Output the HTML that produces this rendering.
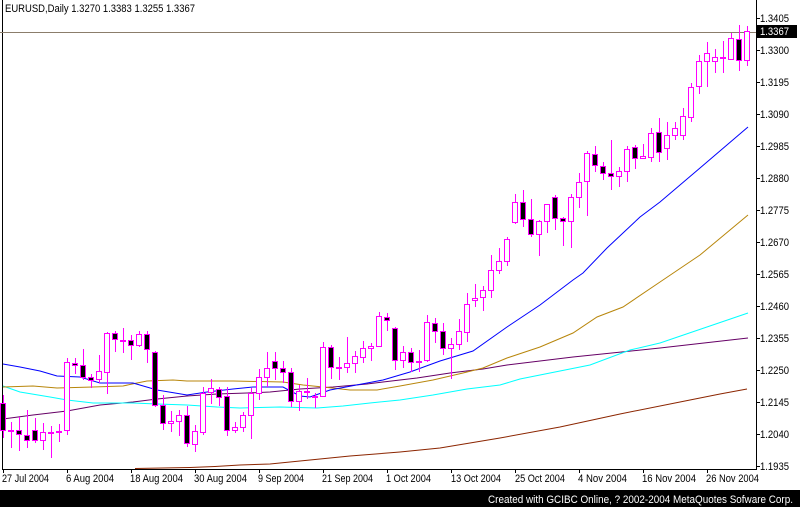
<!DOCTYPE html>
<html><head><meta charset="utf-8"><style>
html,body{margin:0;padding:0;background:#fff;}
svg{display:block;}
text{font-family:"Liberation Sans","DejaVu Sans",sans-serif;font-size:11px;}
</style></head><body>
<svg width="800" height="507" viewBox="0 0 800 507" xmlns="http://www.w3.org/2000/svg" shape-rendering="crispEdges">
<rect width="800" height="507" fill="#fff"/>
<path d="M2.5 0V469.5H756.5V0" fill="none" stroke="#000"/>
<text x="5" y="12" fill="#000" textLength="190" lengthAdjust="spacingAndGlyphs">EURUSD,Daily  1.3270 1.3383 1.3255 1.3367</text>
<line x1="0" y1="32.5" x2="756" y2="32.5" stroke="#8b7d6b"/>
<g fill="none" stroke-width="1" shape-rendering="auto">
<polyline stroke="#8b2500" points="135,468.5 190,467.5 215,466.5 240,465 270,464 300,461 350,456 400,452 440,448 500,438 560,427 620,414 680,402 720,394 747,389"/>
<polyline stroke="#660066" points="3,419 33,415 67,411 100,405 133,402 157,399 187,396 217,394 247,393 270,392 300,389 333,387 367,384 383,382 417,378 450,373 483,369 507,365 573,357 660,348 748,338"/>
<polyline stroke="#00ffff" points="3,386 20,392 50,397 67,400 93,403 133,403 157,404 187,405 217,407 240,408 280,407 317,408 343,406 370,403 400,400 433,395 467,389 500,385 520,379 590,365 630,350 660,343 748,313"/>
<polyline stroke="#b8860b" points="3,387 33,386 57,388 93,387 123,386 137,383 147,381 173,380 187,381 233,381 283,382 303,385 323,387 350,390 377,390 400,386 433,380 463,373 483,368 507,358 540,347 573,333 597,317 623,307 660,282 700,255 748,215"/>
<polyline stroke="#0000ff" points="3,364 20,367 40,371 57,376 80,377 100,383 133,383 157,390 187,395 207,392 233,389 253,387 283,387 300,396 310,397 330,390 383,380 410,372 440,361 473,351 507,327 540,305 573,280 583,273 607,248 640,217 660,202 700,168 748,127"/>
</g>
<path stroke="#ff00ff" fill="none" d="M3.5 395V438M11.5 422V448M19.5 417V451M27.5 410V448M35.5 418V443M43.5 423V450M51.5 426V458M59.5 424V442M67.5 358V435M75.5 358V374M83.5 349V380M91.5 374V388M99.5 355V383M107.5 332V394M115.5 331V352M123.5 328V353M131.5 335V360M139.5 331V347M147.5 331V363M155.5 351V407M163.5 395V430M171.5 411V432M179.5 410V436M187.5 406V447M195.5 425V452M203.5 387V435M211.5 379V404M219.5 387V406M227.5 387V436M235.5 422V433M243.5 412V432M251.5 388V439M259.5 369V400M267.5 352V387M275.5 352V380M283.5 361V383M291.5 368V407M299.5 385V411M307.5 378V399M315.5 393V408M323.5 342V397M331.5 345V379M339.5 357V380M347.5 337V373M355.5 351V373M363.5 341V363M371.5 343V361M379.5 312V347M387.5 313V331M395.5 327V370M403.5 346V368M411.5 348V372M419.5 350V372M427.5 315V362M435.5 318V343M443.5 323V355M451.5 338V379M459.5 319V350M467.5 293V342M475.5 284V307M483.5 286V311M491.5 255V298M499.5 248V274M507.5 237V266M515.5 194V224M523.5 190V227M531.5 199V237M539.5 220V256M547.5 204V233M555.5 195V230M563.5 217V246M571.5 194V248M579.5 173V208M587.5 151V216M595.5 146V172M603.5 162V180M611.5 140V190M619.5 167V187M627.5 146V182M635.5 145V169M643.5 144V158M651.5 128V162M659.5 118V162M667.5 122V160M675.5 122V140M683.5 108V140M691.5 83V122M699.5 55V94M707.5 42V87M715.5 49V73M723.5 41V73M731.5 33V60M739.5 25V71M747.5 26V66"/>
<g fill="#fff" stroke="#ff00ff">
<rect x="8.5" y="430.5" width="5" height="1"/>
<rect x="40.5" y="432.5" width="5" height="8"/>
<rect x="48.5" y="432.5" width="5" height="1"/>
<rect x="56.5" y="431.5" width="5" height="1"/>
<rect x="64.5" y="362.5" width="5" height="68"/>
<rect x="96.5" y="371.5" width="5" height="8"/>
<rect x="104.5" y="333.5" width="5" height="39"/>
<rect x="120.5" y="340.5" width="5" height="1"/>
<rect x="136.5" y="334.5" width="5" height="11"/>
<rect x="168.5" y="421.5" width="5" height="2"/>
<rect x="176.5" y="415.5" width="5" height="6"/>
<rect x="192.5" y="431.5" width="5" height="13"/>
<rect x="200.5" y="393.5" width="5" height="39"/>
<rect x="208.5" y="388.5" width="5" height="4"/>
<rect x="232.5" y="427.5" width="5" height="3"/>
<rect x="240.5" y="415.5" width="5" height="12"/>
<rect x="248.5" y="393.5" width="5" height="22"/>
<rect x="256.5" y="377.5" width="5" height="16"/>
<rect x="264.5" y="368.5" width="5" height="9"/>
<rect x="296.5" y="391.5" width="5" height="10"/>
<rect x="304.5" y="391.5" width="5" height="1"/>
<rect x="312.5" y="396.5" width="5" height="1"/>
<rect x="320.5" y="347.5" width="5" height="49"/>
<rect x="336.5" y="367.5" width="5" height="1"/>
<rect x="344.5" y="363.5" width="5" height="4"/>
<rect x="352.5" y="356.5" width="5" height="7"/>
<rect x="360.5" y="348.5" width="5" height="9"/>
<rect x="368.5" y="346.5" width="5" height="2"/>
<rect x="376.5" y="316.5" width="5" height="30"/>
<rect x="400.5" y="352.5" width="5" height="8"/>
<rect x="416.5" y="361.5" width="5" height="1"/>
<rect x="424.5" y="322.5" width="5" height="38"/>
<rect x="448.5" y="344.5" width="5" height="4"/>
<rect x="456.5" y="331.5" width="5" height="13"/>
<rect x="464.5" y="304.5" width="5" height="28"/>
<rect x="472.5" y="298.5" width="5" height="2"/>
<rect x="480.5" y="290.5" width="5" height="7"/>
<rect x="488.5" y="270.5" width="5" height="20"/>
<rect x="496.5" y="261.5" width="5" height="9"/>
<rect x="504.5" y="239.5" width="5" height="22"/>
<rect x="512.5" y="202.5" width="5" height="20"/>
<rect x="536.5" y="221.5" width="5" height="13"/>
<rect x="544.5" y="204.5" width="5" height="17"/>
<rect x="568.5" y="197.5" width="5" height="24"/>
<rect x="576.5" y="182.5" width="5" height="15"/>
<rect x="584.5" y="153.5" width="5" height="28"/>
<rect x="616.5" y="171.5" width="5" height="5"/>
<rect x="624.5" y="149.5" width="5" height="22"/>
<rect x="640.5" y="156.5" width="5" height="2"/>
<rect x="648.5" y="133.5" width="5" height="24"/>
<rect x="664.5" y="135.5" width="5" height="13"/>
<rect x="672.5" y="128.5" width="5" height="7"/>
<rect x="680.5" y="116.5" width="5" height="19"/>
<rect x="688.5" y="87.5" width="5" height="30"/>
<rect x="696.5" y="61.5" width="5" height="25"/>
<rect x="704.5" y="53.5" width="5" height="8"/>
<rect x="712.5" y="57.5" width="5" height="4"/>
<rect x="720.5" y="57.5" width="5" height="1"/>
<rect x="728.5" y="38.5" width="5" height="21"/>
<rect x="744.5" y="31.5" width="5" height="29"/>
</g>
<g fill="#000" stroke="#ff00ff">
<rect x="0.5" y="403.5" width="5" height="27"/>
<rect x="16.5" y="430.5" width="5" height="4"/>
<rect x="24.5" y="435.5" width="5" height="5"/>
<rect x="32.5" y="430.5" width="5" height="10"/>
<rect x="72.5" y="363.5" width="5" height="2"/>
<rect x="80.5" y="365.5" width="5" height="12"/>
<rect x="88.5" y="377.5" width="5" height="3"/>
<rect x="112.5" y="333.5" width="5" height="6"/>
<rect x="128.5" y="340.5" width="5" height="5"/>
<rect x="144.5" y="334.5" width="5" height="15"/>
<rect x="152.5" y="352.5" width="5" height="53"/>
<rect x="160.5" y="405.5" width="5" height="18"/>
<rect x="184.5" y="415.5" width="5" height="28"/>
<rect x="216.5" y="389.5" width="5" height="8"/>
<rect x="224.5" y="396.5" width="5" height="34"/>
<rect x="272.5" y="361.5" width="5" height="7"/>
<rect x="280.5" y="368.5" width="5" height="4"/>
<rect x="288.5" y="372.5" width="5" height="29"/>
<rect x="328.5" y="347.5" width="5" height="20"/>
<rect x="384.5" y="317.5" width="5" height="3"/>
<rect x="392.5" y="328.5" width="5" height="32"/>
<rect x="408.5" y="352.5" width="5" height="10"/>
<rect x="432.5" y="323.5" width="5" height="8"/>
<rect x="440.5" y="331.5" width="5" height="17"/>
<rect x="520.5" y="202.5" width="5" height="17"/>
<rect x="528.5" y="219.5" width="5" height="15"/>
<rect x="552.5" y="197.5" width="5" height="21"/>
<rect x="560.5" y="218.5" width="5" height="3"/>
<rect x="592.5" y="154.5" width="5" height="11"/>
<rect x="600.5" y="166.5" width="5" height="7"/>
<rect x="608.5" y="173.5" width="5" height="3"/>
<rect x="632.5" y="147.5" width="5" height="11"/>
<rect x="656.5" y="132.5" width="5" height="20"/>
<rect x="736.5" y="39.5" width="5" height="21"/>
</g>
<g stroke="#000">
<path d="M756 18.5h4M756 50.5h4M756 82.5h4M756 114.5h4M756 146.5h4M756 178.5h4M756 210.5h4M756 242.5h4M756 274.5h4M756 306.5h4M756 338.5h4M756 370.5h4M756 402.5h4M756 434.5h4M756 466.5h4"/>
<path d="M3.5 469v4M67.5 469v4M131.5 469v4M195.5 469v4M259.5 469v4M323.5 469v4M387.5 469v4M451.5 469v4M515.5 469v4M579.5 469v4M643.5 469v4M707.5 469v4"/>
</g>
<g fill="#000">
<text x="760" y="22" textLength="29" lengthAdjust="spacingAndGlyphs">1.3405</text>
<text x="760" y="54" textLength="29" lengthAdjust="spacingAndGlyphs">1.3300</text>
<text x="760" y="86" textLength="29" lengthAdjust="spacingAndGlyphs">1.3195</text>
<text x="760" y="118" textLength="29" lengthAdjust="spacingAndGlyphs">1.3090</text>
<text x="760" y="150" textLength="29" lengthAdjust="spacingAndGlyphs">1.2985</text>
<text x="760" y="182" textLength="29" lengthAdjust="spacingAndGlyphs">1.2880</text>
<text x="760" y="214" textLength="29" lengthAdjust="spacingAndGlyphs">1.2775</text>
<text x="760" y="246" textLength="29" lengthAdjust="spacingAndGlyphs">1.2670</text>
<text x="760" y="278" textLength="29" lengthAdjust="spacingAndGlyphs">1.2565</text>
<text x="760" y="310" textLength="29" lengthAdjust="spacingAndGlyphs">1.2460</text>
<text x="760" y="342" textLength="29" lengthAdjust="spacingAndGlyphs">1.2355</text>
<text x="760" y="374" textLength="29" lengthAdjust="spacingAndGlyphs">1.2250</text>
<text x="760" y="406" textLength="29" lengthAdjust="spacingAndGlyphs">1.2145</text>
<text x="760" y="438" textLength="29" lengthAdjust="spacingAndGlyphs">1.2040</text>
<text x="760" y="470" textLength="29" lengthAdjust="spacingAndGlyphs">1.1935</text>
</g>
<rect x="757" y="25" width="40" height="13" fill="#000"/>
<text x="760" y="35" fill="#fff" textLength="29" lengthAdjust="spacingAndGlyphs">1.3367</text>
<g fill="#000">
<text x="2" y="482" textLength="47" lengthAdjust="spacingAndGlyphs">27 Jul 2004</text>
<text x="66" y="482" textLength="48" lengthAdjust="spacingAndGlyphs">6 Aug 2004</text>
<text x="130" y="482" textLength="53" lengthAdjust="spacingAndGlyphs">18 Aug 2004</text>
<text x="194" y="482" textLength="53" lengthAdjust="spacingAndGlyphs">30 Aug 2004</text>
<text x="258" y="482" textLength="46" lengthAdjust="spacingAndGlyphs">9 Sep 2004</text>
<text x="322" y="482" textLength="51" lengthAdjust="spacingAndGlyphs">21 Sep 2004</text>
<text x="386" y="482" textLength="45" lengthAdjust="spacingAndGlyphs">1 Oct 2004</text>
<text x="451" y="482" textLength="50" lengthAdjust="spacingAndGlyphs">13 Oct 2004</text>
<text x="515" y="482" textLength="50" lengthAdjust="spacingAndGlyphs">25 Oct 2004</text>
<text x="578" y="482" textLength="49" lengthAdjust="spacingAndGlyphs">4 Nov 2004</text>
<text x="642" y="482" textLength="54" lengthAdjust="spacingAndGlyphs">16 Nov 2004</text>
<text x="706" y="482" textLength="53" lengthAdjust="spacingAndGlyphs">26 Nov 2004</text>
</g>
<rect x="0" y="490" width="800" height="17" fill="#000"/>
<text x="488" y="503" fill="#fff" textLength="305" lengthAdjust="spacingAndGlyphs">Created with GCIBC Online, ? 2002-2004 MetaQuotes Sofware Corp.</text>
</svg>
</body></html>
